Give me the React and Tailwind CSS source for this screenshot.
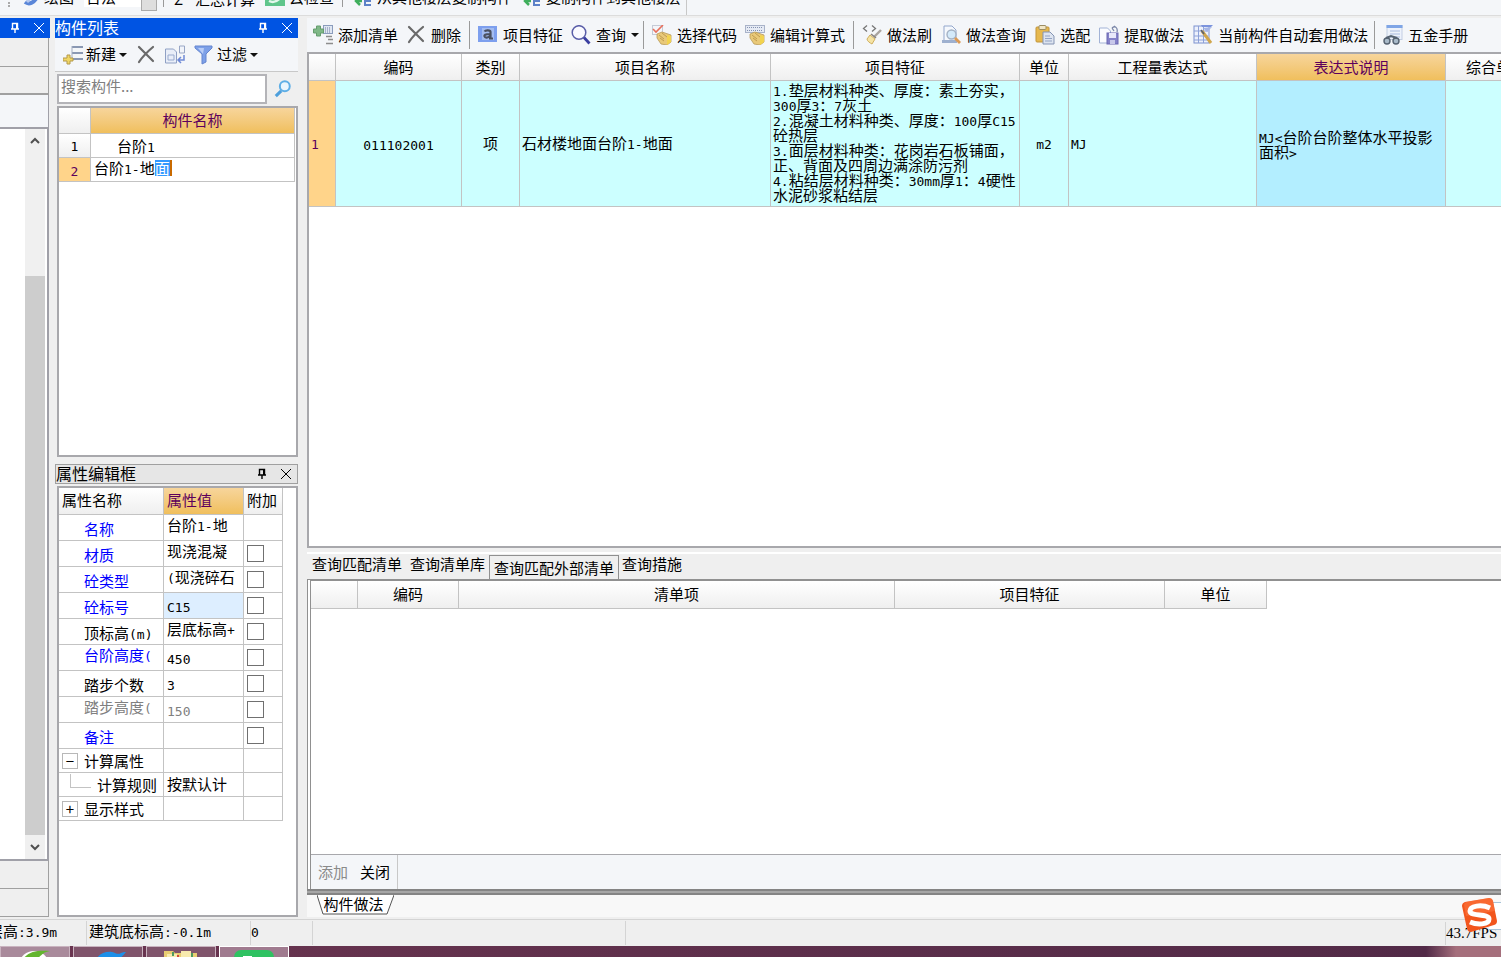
import React from 'react';

/* ---------- Ícones ---------- */

const Svg = ({ children, className = 'w-5 h-5' }) => (
    <svg viewBox="0 0 20 20" className={`shrink-0 ${className}`} fill="none" aria-hidden="true">
        {children}
    </svg>
);

const IconAddList = () => (
    <Svg>
        <rect x="10.5" y=".5" width="9" height="8" fill="#dfe6f2" stroke="#8a9cbd" />
        <path d="M12 3h6M12 5h6M12 7h6" stroke="#6f7fa3" strokeDasharray="1 1" />
        <path d="M13 11.5h6M15 14.5h5M13 18.5h7" stroke="#8d8d8d" strokeWidth="1.400" />
        <path d="M3.500 1h4v3h3v4h-3v3h-4V8h-3V4h3z" fill="#7fb887" stroke="#659c6e" />
    </Svg>
);

const IconDelete = () => (
    <Svg>
        <path d="M3 2c4 4 9 9 14 14M17 2C11 7 7 11 3 17" stroke="#6a6a6a" strokeWidth="2.200" strokeLinecap="round" />
    </Svg>
);

const IconFeature = () => (
    <Svg>
        <rect x="0" y="1" width="19" height="16" fill="#7d9fee" />
        <rect x="4" y="3" width="12" height="12" fill="#a3bcf0" />
        <path d="M6.500 6.500c1-1.500 6-1.500 6 .5v6.500M12 9c-5 0-6 1-5.500 2.500.5 1.500 3.500 1.500 5.500-.5M11 13.500h4" stroke="#4a5060" strokeWidth="2.200" />
    </Svg>
);

const IconSearch = () => (
    <Svg>
        <circle cx="8" cy="7.500" r="6.800" fill="#fafaff" stroke="#5a5ea8" strokeWidth="1.500" />
        <path d="M13 12.500l5.500 6" stroke="#3a3ea0" strokeWidth="2.800" />
    </Svg>
);

const Hand = () => (
    <>
        <path d="M5 9l5-2 9 3v7l-4 3-6-1-4-6z" fill="#e9c979" stroke="#b99a58" strokeWidth=".8" />
        <path d="M7 10l5 4M8 13l4 3M10 8l5 4" stroke="#c09b4f" />
        <path d="M15 10l4 1v6l-4 3z" fill="#f2d34f" />
    </>
);

const IconPickCode = () => (
    <Svg>
        <rect x=".5" y=".5" width="10" height="9" fill="#f4f5f9" stroke="#c5cad6" />
        <path d="M1 4l3 3 7-7" stroke="#e8705c" strokeWidth="1.600" />
        <Hand />
    </Svg>
);

const IconEditFormula = () => (
    <Svg>
        <rect x=".5" y=".5" width="19" height="7" fill="#e5eaf4" stroke="#a9b3c9" />
        <path d="M2 2.500h16M2 5.500h16" stroke="#8492b0" strokeDasharray="1 1" />
        <Hand />
    </Svg>
);

const IconBrush = () => (
    <Svg>
        <path d="M5 .5L1.500 3.500 5 6.500M10 .5l3.500 3-3.500 3" stroke="#777" strokeWidth="1.300" />
        <path d="M19 5l-7 7" stroke="#a9a4a0" strokeWidth="2.400" />
        <path d="M8 10l5 4-3 5c-2-1-5-3-5-5z" fill="#f5e3a4" stroke="#cfae5e" />
        <path d="M9 9l5 4" stroke="#8a8580" strokeWidth="1.600" />
    </Svg>
);

const IconQueryMethod = () => (
    <Svg>
        <path d="M3 1h8l4 4v12H3z" fill="#f5f8fd" stroke="#93a7cc" />
        <path d="M1 15h15v3H1z" fill="#9eb0cf" />
        <circle cx="10.500" cy="9.500" r="4.500" fill="#d4eafa" stroke="#a3b1c4" strokeWidth="1.400" />
        <path d="M14 13l5 5" stroke="#dc9a55" strokeWidth="2.800" />
    </Svg>
);

const IconPaste = () => (
    <Svg>
        <rect x="1" y="2" width="13" height="15" rx="1" fill="#e6b84e" stroke="#c2953a" />
        <rect x="4" y=".5" width="7" height="4" rx="1" fill="#f1e6c6" stroke="#9c8d63" />
        <path d="M8 7h7l4 4v8H8z" fill="#dde4f0" stroke="#8494b4" />
        <path d="M10 11h5M10 13.500h7M10 16h7" stroke="#93a3c4" />
    </Svg>
);

const IconExtract = () => (
    <Svg>
        <path d="M.5 3h8l3 3v12H.5z" fill="#fbfcff" stroke="#a3b3d6" />
        <rect x="8" y="8" width="11" height="11" fill="#8582c9" stroke="#6a67b2" />
        <rect x="10" y="8" width="7" height="5" fill="#e8e8fa" />
        <rect x="11" y="15" width="5" height="4" fill="#c8c8ea" />
        <path d="M13 3c3-3 6 0 5 4M13 3l3-2M13 3l2 3" stroke="#7a86a8" strokeWidth="1.300" />
    </Svg>
);

const IconAutoApply = () => (
    <Svg>
        <rect x="1" y="1" width="15" height="17" fill="#edf1fc" stroke="#7c92cf" />
        <path d="M1 6h14M1 11h14M1 15h14M5.500 1v17M10.500 1v17" stroke="#8da1d8" />
        <path d="M8 0h12l-2 2H9z" fill="#7b93dd" />
        <path d="M10 3l9-1-5 5z" fill="#a6b6e6" />
        <path d="M9 6l9 12" stroke="#d0a64c" strokeWidth="3" />
        <path d="M8 5l3 4" stroke="#5c6070" strokeWidth="1.500" />
    </Svg>
);

const IconManual = () => (
    <Svg>
        <rect x="4" y=".5" width="15" height="14" fill="#edf2fb" stroke="#c2cde2" />
        <rect x="3.500" y="0" width="16" height="3" fill="#7fa5e6" />
        <path d="M7 6h10M7 9h10M7 12h10" stroke="#a8bbe0" />
        <circle cx="4" cy="16" r="3" fill="#a9bac9" stroke="#566372" strokeWidth="1.400" />
        <circle cx="13" cy="16" r="3" fill="#a9bac9" stroke="#566372" strokeWidth="1.400" />
        <path d="M3 13l5-2 6 2" stroke="#566372" strokeWidth="2" />
    </Svg>
);

const IconNew = () => (
    <Svg>
        <path d="M9 2h11M9 8h11M9 14h11" stroke="#8a98b3" strokeWidth="2" />
        <path d="M9 1v14" stroke="#a4aec2" />
        <path d="M4 10h3v3h3v3H7v3H4v-3H0v-3h4z" fill="#f0d664" stroke="#b4994a" />
    </Svg>
);

const IconCopy = () => (
    <Svg>
        <path d="M.5 4h8l3 3v11H.5z" fill="#e9eef8" stroke="#8fa0c4" />
        <path d="M3 10h6v5H3z" stroke="#9aabcf" />
        <path d="M14.500 1h5v7h-5z" fill="#f1f4fa" stroke="#98a6c5" />
        <path d="M19 10v5h-5m2-3l-3 3 3 3" stroke="#6f8ad6" strokeWidth="1.500" />
    </Svg>
);

const IconFilter = () => (
    <Svg>
        <path d="M1 1h17v2l-6 6v8l-4 2V9L1 3z" fill="#7da0e8" stroke="#6485cf" />
        <path d="M4 3h6l-1 6z" fill="#b9cdf7" />
    </Svg>
);

const IconMagnifier = () => (
    <Svg className="w-[18px] h-[18px]">
        <circle cx="12" cy="7" r="5.500" fill="#eaf5fd" stroke="#5eaee6" strokeWidth="2.200" />
        <path d="M8 12l-6 6" stroke="#4d9fdc" strokeWidth="3.400" />
    </Svg>
);

const IconPin = () => (
    <svg viewBox="0 0 10 12" className="w-2.5 h-3" fill="none" aria-hidden="true">
        <path d="M2.500 6.500v-5h5v5M1 7h8M5 7v4" stroke="currentColor" strokeWidth="1.400" />
        <path d="M6 1h2v6H6z" fill="currentColor" />
    </svg>
);

const IconClose = () => (
    <svg viewBox="0 0 10 10" className="w-2.5 h-2.5" fill="none" aria-hidden="true">
        <path d="M0 0l10 10M10 0L0 10" stroke="currentColor" />
    </svg>
);

const Caret = () => (
    <svg viewBox="0 0 8 4" className="w-2 h-1 shrink-0" aria-hidden="true">
        <path d="M0 0h8L4 4z" fill="#111" />
    </svg>
);

const Chevron = ({ up = false }) => (
    <svg viewBox="0 0 10 8" className="w-2.5 h-2" fill="none" aria-hidden="true">
        <path d={up ? 'M1 6l4-4 4 4' : 'M1 2l4 4 4-4'} stroke="#505050" strokeWidth="2" />
    </svg>
);

/* ---------- Peças comuns ---------- */

// Os trechos latinos usam a fonte monoespaçada, como nas células da grade
const Mixed = ({ text }) =>
    text.split(/([\x20-\x7e]+)/).map((part, i) =>
        i % 2 ? (
            <span key={i} className="font-['DejaVu_Sans_Mono',monospace] text-[13px] leading-none">{part}</span>
        ) : (
            part
        )
    );

const PanelTitle = ({ title, active = false }) => (
    <div className={`flex h-5 shrink-0 items-center justify-between pr-1.5 text-base leading-none ${active ? 'bg-[#0054e3] text-white' : 'border border-[#a0a0a0] bg-[#e6e6e6] text-black'}`}>
        <h2 className="pb-0.5">{title}</h2>
        <div className="flex items-center gap-3.5">
            <button type="button" aria-label="固定"><IconPin /></button>
            <button type="button" aria-label="关闭面板"><IconClose /></button>
        </div>
    </div>
);

const ToolButton = ({ icon: Icon, label, caret }) => (
    <button type="button" className="flex shrink-0 items-center gap-[5px] whitespace-nowrap">
        <Icon />
        {label}
        {caret && <Caret />}
    </button>
);

const Divider = ({ className = '' }) => <div className={`h-7 w-px shrink-0 bg-[#9a9a9a] ${className}`} />;

const headCell = 'border-r border-b border-[#c3c3c3] bg-linear-to-b from-white to-[#efefef] p-0 pb-0.5 font-normal';
const headActive = 'border-r border-b border-[#c3c3c3] bg-linear-to-b from-[#f7d59b] to-[#f0bf5c] p-0 pb-0.5 font-normal text-[#5c005c]';

/* ---------- Barra superior ---------- */

const TopStrip = () => (
    <div className="flex h-4 shrink-0 overflow-hidden border-b border-[#dcdcdc] bg-[#f4f6f9]">
        <div className="flex h-[15px] w-[687px] shrink-0 items-end border-r border-[#c8c8c8] pb-2 pl-2 text-[15px] leading-4 whitespace-nowrap">
            <span className="mr-3 h-4 border-l-2 border-dotted border-[#aaa]" />
            <button type="button" className="flex w-[62px] items-center gap-0.5">
                <svg viewBox="0 0 20 20" className="h-5 w-5" fill="none" aria-hidden="true">
                    <path d="M3 15c4 3 9 1 12-5l2-6" stroke="#5a86d8" strokeWidth="4" />
                    <path d="M5 15l8-9" stroke="#b6c8ee" strokeWidth="3" />
                </svg>
                绘图
            </button>
            <div className="flex h-5 w-[73px] items-center justify-between bg-white pl-0.5">
                台法
                <span className="flex h-7 w-4 items-center justify-center border border-[#aaa] bg-[#dedede]"><Caret /></span>
            </div>
            <span className="ml-1.5 h-6 border-l border-[#999]" />
            <button type="button" className="ml-2.5 flex w-[81px] items-center justify-between"><span>Σ</span>汇总计算</button>
            <button type="button" className="ml-2.5 flex items-center gap-1">
                <svg viewBox="0 0 20 20" className="h-5 w-5" fill="none" aria-hidden="true">
                    <path d="M0 3h20v16H0z" fill="#5fc58b" />
                    <path d="M4 14c4 2 8 1 12-4" stroke="#e4f7ec" strokeWidth="2.500" />
                </svg>
                云检查
            </button>
            <span className="ml-2 h-6 border-l border-[#999]" />
            {['从其他楼层复制构件', '复制构件到其他楼层'].map((label) => (
                <button key={label} type="button" className="ml-2.5 flex items-center gap-1">
                    <svg viewBox="0 0 20 20" className="h-5 w-5" fill="none" aria-hidden="true">
                        <path d="M9 14H4m3-4l-4 4 4 4" stroke="#3fae5c" strokeWidth="2.500" />
                        <path d="M12 4h6M12 9h6M12 14h6M12 18h6M12 2v17" stroke="#5d82c8" strokeWidth="2" />
                    </svg>
                    {label}
                </button>
            ))}
        </div>
    </div>
);

/* ---------- Coluna esquerda ---------- */

const NavColumn = () => (
    <aside className="flex w-[50px] shrink-0 flex-col">
        <div className="flex h-5 shrink-0 items-center justify-end gap-3.5 bg-[#0054e3] pr-1.5 text-white">
            <button type="button" aria-label="固定"><IconPin /></button>
            <button type="button" aria-label="关闭面板"><IconClose /></button>
        </div>
        <div className="mr-px h-[29px] shrink-0 border-r border-b border-[#a0a0a0]" />
        <div className="mr-px h-7 shrink-0 border-r border-b-2 border-[#a0a0a0]" />
        <div className="mr-px h-[34px] shrink-0 border-r border-b-2 border-[#a0a0a8] bg-[#f4f6f9]" />
        <div className="mr-px flex flex-1 justify-end border-r-2 border-b-2 border-[#a0a0a8] bg-white">
            <div className="mr-0.5 flex w-5 flex-col items-center bg-[#f0f0f0]">
                <button type="button" aria-label="向上滚动" className="flex h-6 items-center"><Chevron up /></button>
                <div className="grow-[123]" />
                <div className="w-full grow-[560] bg-[#cdcdcd]" />
                <button type="button" aria-label="向下滚动" className="flex h-6 items-center"><Chevron /></button>
            </div>
        </div>
        <div className="mr-px h-7 shrink-0 border-r border-b border-[#a0a0a0]" />
        <div className="mr-px h-7 shrink-0 border-r border-b border-[#a0a0a0]" />
    </aside>
);

/* ---------- Lista de componentes ---------- */

const ComponentList = () => (
    <section className="flex basis-[439px] flex-col">
        <PanelTitle title="构件列表" active />
        <div className="flex h-[34px] shrink-0 items-center gap-[9px] border-b border-[#c8c8c8] bg-[#f4f6f9] pl-2 text-[15px] whitespace-nowrap">
            <button type="button" className="flex items-center gap-[3px]"><IconNew />新建<Caret /></button>
            <button type="button" aria-label="删除构件"><IconDelete /></button>
            <button type="button" aria-label="复制"><IconCopy /></button>
            <button type="button" className="flex items-center gap-[3px]"><IconFilter />过滤<Caret /></button>
        </div>
        <div className="flex h-8 shrink-0 items-stretch pt-0.5 pl-0.5">
            <input
                type="text"
                aria-label="搜索构件"
                placeholder="搜索构件..."
                className="min-w-0 flex-1 border-2 border-[#b4b4b8] bg-white px-0.5 pb-1.5 text-[15px] placeholder:text-[#808080]"
            />
            <button type="button" aria-label="搜索" className="flex w-[31px] items-center justify-center"><IconMagnifier /></button>
        </div>
        <div className="mt-0.5 ml-0.5 flex-1 border-2 border-[#a8a8ac] bg-white">
            <table className="w-[236px] table-fixed border-separate border-spacing-0 text-[15px] leading-4">
                <colgroup>
                    <col className="w-8" />
                    <col />
                </colgroup>
                <thead>
                    <tr className="h-[26px]">
                        <th className={headCell} />
                        <th className={headActive}>构件名称</th>
                    </tr>
                </thead>
                <tbody>
                    <tr className="h-6">
                        <td className={`${headCell} text-center`}><Mixed text="1" /></td>
                        <td className="border-r border-b border-[#c3c3c3] p-0 pl-[26px]"><Mixed text="台阶1" /></td>
                    </tr>
                    <tr className="h-6">
                        <td className="border-r border-b border-[#c3c3c3] bg-[#ffd48a] p-0 text-center text-[#5c005c]"><Mixed text="2" /></td>
                        <td className="border-r border-b border-[#c3c3c3] p-0 pl-[3px] align-top">
                            <div className="flex items-center pt-0.5">
                                <span><Mixed text="台阶1-地" /></span>
                                <span className="border-r-2 border-[#c96a00] bg-[#3399ff] text-white">面</span>
                            </div>
                        </td>
                    </tr>
                </tbody>
            </table>
        </div>
    </section>
);

/* ---------- Editor de propriedades ---------- */

const properties = [
    { name: '名称', value: '台阶1-地', tone: 'text-[#0000ff]', valueTop: true, noCheck: true },
    { name: '材质', value: '现浇混凝', tone: 'text-[#0000ff]', valueTop: true },
    { name: '砼类型', value: '(现浇碎石', tone: 'text-[#0000ff]', valueTop: true },
    { name: '砼标号', value: 'C15', tone: 'text-[#0000ff]', selected: true },
    { name: '顶标高(m)', value: '层底标高+', tone: 'text-black', valueTop: true },
    { name: '台阶高度(', value: '450', tone: 'text-[#0000ff]', nameTop: true },
    { name: '踏步个数', value: '3', tone: 'text-black' },
    { name: '踏步高度(', value: '150', tone: 'text-[#808080]', valueTone: 'text-[#808080]', nameTop: true },
    { name: '备注', value: '', tone: 'text-[#0000ff]' },
];

const groups = [
    { name: '计算属性', sign: '−', value: '' },
    { name: '计算规则', value: '按默认计', child: true },
    { name: '显示样式', sign: '+', value: '' },
];

const cell = 'border-r border-b border-[#c3c3c3] p-0';

const PropertyEditor = () => (
    <section className="mt-[7px] flex min-h-0 flex-1 flex-col">
        <PanelTitle title="属性编辑框" />
        <div className="mt-0.5 ml-0.5 flex-1 border-2 border-[#a8a8ac] bg-white">
            <table className="w-[224px] table-fixed border-separate border-spacing-0 text-[15px] leading-4 whitespace-nowrap">
                <colgroup>
                    <col className="w-[105px]" />
                    <col className="w-20" />
                    <col />
                </colgroup>
                <thead>
                    <tr className="h-[27px] text-left">
                        <th className={`${headCell} pl-[3px]`}>属性名称</th>
                        <th className={`${headActive} pl-[3px]`}>属性值</th>
                        <th className={`${headCell} pl-[3px]`}>附加</th>
                    </tr>
                </thead>
                <tbody>
                    {properties.map((p) => (
                        <tr key={p.name} className="h-[26px]">
                            <td className={`${cell} pl-[25px] ${p.tone} ${p.nameTop ? 'pt-0.5 align-top' : 'pt-0.5'}`}>
                                <Mixed text={p.name} />
                            </td>
                            <td className={`${cell} pl-[3px] ${p.valueTone || ''} ${p.valueTop ? 'pt-0.5 align-top' : ''} ${p.selected ? 'bg-[#ddeeff]' : ''}`}>
                                <Mixed text={p.value} />
                            </td>
                            <td className={`${cell} pl-[3px]`}>
                                {!p.noCheck && (
                                    <input type="checkbox" aria-label={`附加 ${p.name}`} className="block h-[17px] w-[17px] appearance-none border border-[#707070] bg-white" />
                                )}
                            </td>
                        </tr>
                    ))}
                    {groups.map((g) => (
                        <tr key={g.name} className="h-6">
                            <td className={cell}>
                                <div className="flex h-full items-center pl-[3px]">
                                    {g.child ? (
                                        <span className="mr-1.5 mb-2 ml-2 h-3.5 w-[21px] border-b border-l border-[#c3c3c3]" />
                                    ) : (
                                        <button type="button" className="mr-1.5 flex h-4 w-4 items-center justify-center border border-[#b8b8b8] leading-none">
                                            {g.sign}
                                        </button>
                                    )}
                                    {g.name}
                                </div>
                            </td>
                            <td className={`${cell} pb-0.5 pl-[3px]`}>{g.value}</td>
                            <td className={cell} />
                        </tr>
                    ))}
                </tbody>
            </table>
        </div>
    </section>
);

/* ---------- Grade principal ---------- */

const features = [
    '1.垫层材料种类、厚度：素土夯实，',
    '300厚3：7灰土',
    '2.混凝土材料种类、厚度：100厚C15',
    '砼热层',
    '3.面层材料种类：花岗岩石板铺面，',
    '正、背面及四周边满涂防污剂',
    '4.粘结层材料种类：30mm厚1：4硬性',
    '水泥砂浆粘结层',
];

const MethodToolbar = () => (
    <div className="flex h-[34px] shrink-0 items-center gap-2 overflow-hidden bg-[#f4f6f9] pl-1.5 text-[15px]">
        <ToolButton icon={IconAddList} label="添加清单" />
        <ToolButton icon={IconDelete} label="删除" />
        <Divider />
        <ToolButton icon={IconFeature} label="项目特征" />
        <ToolButton icon={IconSearch} label="查询" caret />
        <Divider className="-ml-1" />
        <ToolButton icon={IconPickCode} label="选择代码" />
        <ToolButton icon={IconEditFormula} label="编辑计算式" />
        <Divider />
        <div className="flex gap-[9px]">
            <ToolButton icon={IconBrush} label="做法刷" />
            <ToolButton icon={IconQueryMethod} label="做法查询" />
            <ToolButton icon={IconPaste} label="选配" />
            <ToolButton icon={IconExtract} label="提取做法" />
            <ToolButton icon={IconAutoApply} label="当前构件自动套用做法" />
        </div>
        <Divider className="-ml-0.5" />
        <ToolButton icon={IconManual} label="五金手册" />
    </div>
);

const MethodGrid = () => (
    <div className="min-h-0 flex-1 overflow-hidden border-t-2 border-b-2 border-l-2 border-[#a8a8ac] bg-white">
        <table className="w-[1238px] table-fixed border-separate border-spacing-0 text-[15px] leading-[15px]">
            <colgroup>
                <col className="w-[27px]" />
                <col className="w-[126px]" />
                <col className="w-[58px]" />
                <col className="w-[251px]" />
                <col className="w-[249px]" />
                <col className="w-[49px]" />
                <col className="w-[188px]" />
                <col className="w-[189px]" />
                <col />
            </colgroup>
            <thead>
                <tr className="h-[27px]">
                    <th className={headCell} />
                    {['编码', '类别', '项目名称', '项目特征', '单位', '工程量表达式'].map((h) => (
                        <th key={h} className={headCell}>{h}</th>
                    ))}
                    <th className={headActive}>表达式说明</th>
                    <th className={headCell}>综合单价</th>
                </tr>
            </thead>
            <tbody>
                <tr className="h-[126px] bg-[#ccffff]">
                    <td className={`${cell} bg-[#ffd48a] pb-0.5 pl-0.5 text-[#5c005c]`}><Mixed text="1" /></td>
                    <td className={`${cell} text-center`}><Mixed text="011102001" /></td>
                    <td className={`${cell} pb-0.5 text-center`}>项</td>
                    <td className={`${cell} pb-0.5 pl-0.5`}><Mixed text="石材楼地面台阶1-地面" /></td>
                    <td className={`${cell} pb-[3px] pl-0.5 whitespace-nowrap`}>
                        {features.map((line) => (
                            <div key={line} className="h-[15px]"><Mixed text={line} /></div>
                        ))}
                    </td>
                    <td className={`${cell} pb-0.5 text-center`}><Mixed text="m2" /></td>
                    <td className={`${cell} pb-0.5 pl-0.5`}><Mixed text="MJ" /></td>
                    <td className={`${cell} bg-[#b3eeff] pl-0.5 whitespace-nowrap`}>
                        <div className="h-[15px]"><Mixed text="MJ<台阶台阶整体水平投影" /></div>
                        <div className="h-[15px]"><Mixed text="面积>" /></div>
                    </td>
                    <td className={cell} />
                </tr>
            </tbody>
        </table>
    </div>
);

const QueryPanel = () => (
    <div className="flex basis-[341px] flex-col">
        <div role="tablist" className="mt-1 flex h-[27px] shrink-0 items-end border-t-2 border-white pl-[5px] text-[15px] leading-4">
            <button type="button" role="tab" className="mr-2 mb-[7px]">查询匹配清单</button>
            <button type="button" role="tab" className="mr-1 mb-[7px]">查询清单库</button>
            <button type="button" role="tab" aria-selected="true" className="mr-[3px] h-6 border-x border-t border-[#909090] px-1">查询匹配外部清单</button>
            <button type="button" role="tab" className="mb-[7px]">查询措施</button>
        </div>
        <div className="flex flex-1 flex-col border-t-2 border-l-4 border-double border-[#909090] bg-white">
            <table className="w-[956px] table-fixed border-separate border-spacing-0 text-[15px] leading-4">
                <colgroup>
                    <col className="w-[47px]" />
                    <col className="w-[101px]" />
                    <col className="w-[436px]" />
                    <col className="w-[270px]" />
                    <col />
                </colgroup>
                <thead>
                    <tr className="h-7">
                        <th className={headCell} />
                        {['编码', '清单项', '项目特征', '单位'].map((h) => (
                            <th key={h} className={headCell}>{h}</th>
                        ))}
                    </tr>
                </thead>
            </table>
            <div className="mt-auto flex h-[35px] shrink-0 border-t border-[#a8a8ac] bg-[#f4f6f9]">
                <div className="flex items-center gap-3 border-r border-[#c8c8c8] px-[7px] text-[15px]">
                    <button type="button" disabled className="text-[#8a8a8a]">添加</button>
                    <button type="button">关闭</button>
                </div>
            </div>
        </div>
    </div>
);

const SheetTabs = () => (
    <div className="shrink-0 bg-[#f8f8f8]">
        <div className="h-1.5 border-y-2 border-[#848484] bg-[#a6a6a6]" />
        <div className="h-[22px] pl-2.5">
            <button type="button" className="relative flex h-5 w-[77px] items-center justify-center text-[15px] leading-none">
                <svg viewBox="0 0 77 20" className="absolute inset-0 h-full w-full" aria-hidden="true">
                    <path d="M0 0l6 19h64l7-19" fill="#fff" stroke="#555" />
                </svg>
                <span className="relative pr-1 pb-1">构件做法</span>
            </button>
        </div>
    </div>
);

/* ---------- Rodapé ---------- */

const StatusBar = () => (
    <footer className="flex h-[27px] shrink-0 items-center overflow-hidden border-t border-[#d4d4d4] bg-[#efefef] text-[15px] leading-none whitespace-nowrap">
        <div className="w-[87px] shrink-0 border-r border-[#d4d4d4]"><div className="-ml-3 pt-0.5 pb-1.5"><Mixed text="层高:3.9m" /></div></div>
        <div className="w-[164px] shrink-0 border-r border-[#d4d4d4] pt-0.5 pb-1.5 pl-0.5"><Mixed text="建筑底标高:-0.1m" /></div>
        <div className="w-[62px] shrink-0 border-r border-[#d4d4d4] pt-0.5 pb-1.5"><Mixed text="0" /></div>
        <div className="h-6 w-[313px] shrink-0 border-r border-[#d4d4d4]" />
        <div className="ml-auto w-14 border-l border-[#d4d4d4] py-1 font-['Liberation_Serif',serif]">43.7FPS</div>
    </footer>
);

const taskButton = 'flex h-6 w-[70px] justify-center border';

const TaskBar = () => (
    <div className="flex h-[11px] shrink-0 gap-[3px] overflow-hidden bg-linear-to-r from-[#6b3550] via-[#522a47] via-95% to-[#a56f7c] to-97%">
        <button type="button" aria-label="浏览器" className={`${taskButton} border-[#c9b3bf] bg-[#a98a9b]`}>
            <svg viewBox="0 0 40 24" className="h-6 w-10" fill="none" aria-hidden="true">
                <ellipse cx="19" cy="16" rx="14" ry="12" fill="#fff" />
                <path d="M8 12c6-8 15-9 27-8-8 1-9 6-14 8-5-3-8-2-13 0z" fill="#63b52e" />
            </svg>
        </button>
        <button type="button" aria-label="网页" className={`${taskButton} border-[#c9b3bf] bg-[#80546b]`}>
            <svg viewBox="0 0 40 24" className="h-6 w-10" fill="none" aria-hidden="true">
                <path d="M6 18C8 8 16 4 24 5c4 1 6 3 9 1 2-1 3-1 5-1-3 4-5 5-7 8l-2 5" fill="#1c8fe8" />
                <path d="M14 15c3-5 9-5 12-1z" fill="#d8effc" />
            </svg>
        </button>
        <button type="button" aria-label="文件夹" className={`${taskButton} border-[#c9b3bf] bg-[#80546b]`}>
            <svg viewBox="0 0 40 24" className="h-6 w-10" fill="none" aria-hidden="true">
                <path d="M3 4h9l2 2h22v18H3z" fill="#e9cd72" />
                <path d="M6 7h10v4H6zM20 4h10v6H20z" fill="#f8eaae" />
                <path d="M12 5v4M31 6v4" stroke="#4d9b60" strokeWidth="2" />
                <path d="M17 8v3" stroke="#d3493a" strokeWidth="2" />
            </svg>
        </button>
        <button type="button" aria-label="应用" className={`${taskButton} border-white bg-[#a07b8f]`}>
            <svg viewBox="0 0 40 24" className="h-6 w-10" fill="none" aria-hidden="true">
                <rect x="0" y="3" width="40" height="24" rx="7" fill="#2fc262" />
                <path d="M9 10h9" stroke="#fff" strokeWidth="2" />
            </svg>
        </button>
    </div>
);

const InputBadge = () => (
    <div className="absolute right-0 bottom-[22px] flex h-[38px] w-10 items-center">
        <div className="ml-auto h-7 w-3 border-y border-[#a9c4d8] bg-white" />
        <svg viewBox="0 0 38 38" className="absolute inset-y-0 left-0 w-[38px]" fill="none" aria-hidden="true">
            <path d="M4 5L28 1q3 0 4 3l4 20q0 3-3 4L10 35q-3 0-4-3L1 9q0-3 3-4z" fill="#f2561d" />
            <path d="M3 8q0-2 2-3l23-4q3 0 4 3l2 10L5 19z" fill="#ff7b45" opacity="0.500" />
            <path d="M29 11C20 7 9 9 9 14c0 6 19 2 19 8 0 6-12 6-19 3" stroke="#fff" strokeWidth="5" />
        </svg>
    </div>
);

export default function App() {
    return (
        <div className="relative flex h-screen flex-col overflow-hidden bg-[#efefef] font-['Noto_Sans_CJK_SC',sans-serif] text-black">
            <TopStrip />
            <main className="flex min-h-0 flex-1 pt-0.5 pb-0.5">
                <NavColumn />
                <div className="ml-[5px] flex w-[243px] shrink-0 flex-col">
                    <ComponentList />
                    <PropertyEditor />
                </div>
                <div className="ml-[9px] flex min-w-0 flex-1 flex-col">
                    <MethodToolbar />
                    <MethodGrid />
                    <QueryPanel />
                    <SheetTabs />
                </div>
            </main>
            <StatusBar />
            <TaskBar />
            <InputBadge />
        </div>
    );
}
